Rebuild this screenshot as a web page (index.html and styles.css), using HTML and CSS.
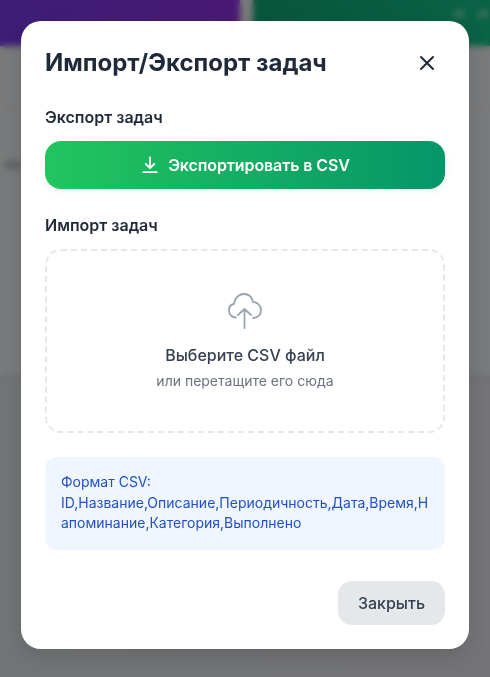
FILE: index.html
```html
<!DOCTYPE html>
<html lang="ru">
<head>
    <meta charset="UTF-8">
    <meta name="viewport" content="width=device-width, initial-scale=1.0">
    <title>Импорт/Экспорт задач</title>
    <link rel="stylesheet" href="styles.css">
</head>
<body>
    <div class="page-behind">
        <div class="top-cards">
            <div class="top-card top-card-purple"></div>
            <div class="top-card top-card-green">
                <span class="card-dot"></span>
                <span class="card-dot"></span>
            </div>
        </div>
        <div class="behind-header"></div>
        <div class="behind-task">
            <div class="behind-text"></div>
        </div>
        <div class="behind-lower"></div>
    </div>

    <div class="modal-overlay">
        <div class="modal">
            <div class="modal-header">
                <h2>Импорт/Экспорт задач</h2>
                <button class="close-icon" type="button" aria-label="Закрыть">
                    <svg width="24" height="24" viewBox="0 0 24 24" fill="none" stroke="currentColor" stroke-width="2" stroke-linecap="round" stroke-linejoin="round">
                        <path d="M6 6l12 12M18 6L6 18"/>
                    </svg>
                </button>
            </div>

            <div class="section-title">Экспорт задач</div>
            <button class="export-button" type="button">
                <svg width="20" height="20" viewBox="0 0 20 20" fill="none" stroke="currentColor" stroke-width="1.8" stroke-linecap="round" stroke-linejoin="round">
                    <path d="M10 2.500V13M5.800 9L10 13.200 14.200 9M3.200 17.200H16.800"/>
                </svg>
                <span>Экспортировать в CSV</span>
            </button>

            <div class="section-title import-title">Импорт задач</div>
            <div class="drop-zone">
                <svg class="cloud-icon" width="36" height="40" viewBox="0 0 36 40" fill="none" stroke="currentColor" stroke-width="1.8" stroke-linecap="round" stroke-linejoin="round">
                    <path d="M9 26.500C5 26.500 2 23.500 2 19.500C2 16 4 13.500 7 13C7.500 7 12 3 17 3C21.500 3 25 6 26 11C30.500 11 34 14.500 34 19C34 23.500 31 26.500 26 27"/>
                    <path d="M17.500 37V18M11 24L17.500 18L24 24"/>
                </svg>
                <div class="drop-title">Выберите CSV файл</div>
                <div class="drop-hint">или перетащите его сюда</div>
            </div>

            <div class="format-info">Формат CSV:<br>ID,Название,Описание,Периодичность,Дата,Время,Напоминание,Категория,Выполнено</div>

            <div class="modal-footer">
                <button class="close-button" type="button">Закрыть</button>
            </div>
        </div>
    </div>
</body>
</html>
```

FILE: styles.css
```css
html, body {
    height: 100%;
    margin: 0;
    padding: 0;
    font-family: Inter, "Noto Sans", sans-serif;
    overflow: hidden;
}

.page-behind {
    height: 100%;
    background-color: #f3f4f6;
    display: flex;
    flex-direction: column;
}

.top-cards {
    display: flex;
    justify-content: space-between;
    height: 46px;
    flex-shrink: 0;
}

.top-card {
    width: 240px;
}

.top-card-purple {
    background: linear-gradient(90deg, #7c3aed, #9333ea);
}

.top-card-green {
    width: 237px;
    display: flex;
    justify-content: flex-end;
    gap: 14px;
    padding: 10px 2px 0 0;
    box-sizing: border-box;
    background: linear-gradient(90deg, #10ac78, #12c68c);
}

.card-dot {
    width: 10px;
    height: 8px;
    background-color: #6fdcb8;
}

.behind-header {
    height: 62px;
    flex-shrink: 0;
}

.behind-task {
    height: 273px;
    flex-shrink: 0;
    box-sizing: border-box;
    padding: 52px 0 0 5px;
    background-color: #f2f4f6;
    border-top: 1px solid #e8ecf0;
    border-bottom: 6px solid #dfe3e7;
}

.behind-text {
    width: 20px;
    height: 8px;
    background-color: #c4c6c9;
}

.behind-lower {
    flex-grow: 1;
    background: linear-gradient(90deg, #e4e9ec, #e9e8ee);
}

.modal-overlay {
    position: fixed;
    inset: 0;
    display: flex;
    align-items: center;
    justify-content: center;
    padding-bottom: 7px;
    background-color: rgba(0, 0, 0, 0.5);
    backdrop-filter: blur(3px);
}

.modal {
    width: 448px;
    height: 628px;
    box-sizing: border-box;
    padding: 24px;
    background-color: #ffffff;
    border-radius: 20px;
    box-shadow: 0 8px 24px rgba(0, 0, 0, 0.12);
    display: flex;
    flex-direction: column;
}

.modal-header {
    display: flex;
    align-items: center;
    justify-content: space-between;
    margin-bottom: 24px;
}

.modal-header h2 {
    margin: 0;
    font-size: 24px;
    line-height: 36px;
    font-weight: 700;
    color: #1f2937;
}

.close-icon {
    width: 36px;
    height: 36px;
    display: flex;
    align-items: center;
    justify-content: center;
    padding: 0;
    border: none;
    background: none;
    color: #1f2937;
}

.section-title {
    font-size: 16px;
    line-height: 24px;
    font-weight: 600;
    color: #1f2937;
    margin-bottom: 12px;
}

.import-title {
    margin-top: 24px;
}

.export-button {
    height: 48px;
    flex-shrink: 0;
    display: flex;
    align-items: center;
    justify-content: center;
    gap: 8px;
    border: none;
    border-radius: 16px;
    background: linear-gradient(90deg, #22c55e, #059669);
    box-shadow: 0 2px 6px rgba(16, 185, 129, 0.12);
    color: #ffffff;
    font-family: inherit;
    font-size: 16px;
    font-weight: 600;
    letter-spacing: -0.1px;
}

.drop-zone {
    height: 184px;
    flex-shrink: 0;
    box-sizing: border-box;
    border: 2px dashed #e5e7eb;
    border-radius: 16px;
    display: flex;
    flex-direction: column;
    align-items: center;
    padding-top: 40px;
}

.cloud-icon {
    color: #9ca3af;
    margin-bottom: 12px;
}

.drop-title {
    font-size: 16px;
    line-height: 24px;
    font-weight: 500;
    color: #374151;
}

.drop-hint {
    font-size: 14px;
    line-height: 20px;
    color: #6b7280;
    margin-top: 4px;
}

.format-info {
    margin-top: 24px;
    padding: 15px 16px 16px;
    background-color: #eff6ff;
    border-radius: 12px;
    font-size: 14px;
    line-height: 20.5px;
    color: #2350c8;
    word-break: break-all;
}

.modal-footer {
    display: flex;
    justify-content: flex-end;
    margin-top: 31px;
}

.close-button {
    height: 44px;
    padding: 0 20px;
    border: none;
    border-radius: 14px;
    background-color: #e5e7eb;
    color: #374151;
    font-family: inherit;
    font-size: 16px;
    font-weight: 500;
}
```
